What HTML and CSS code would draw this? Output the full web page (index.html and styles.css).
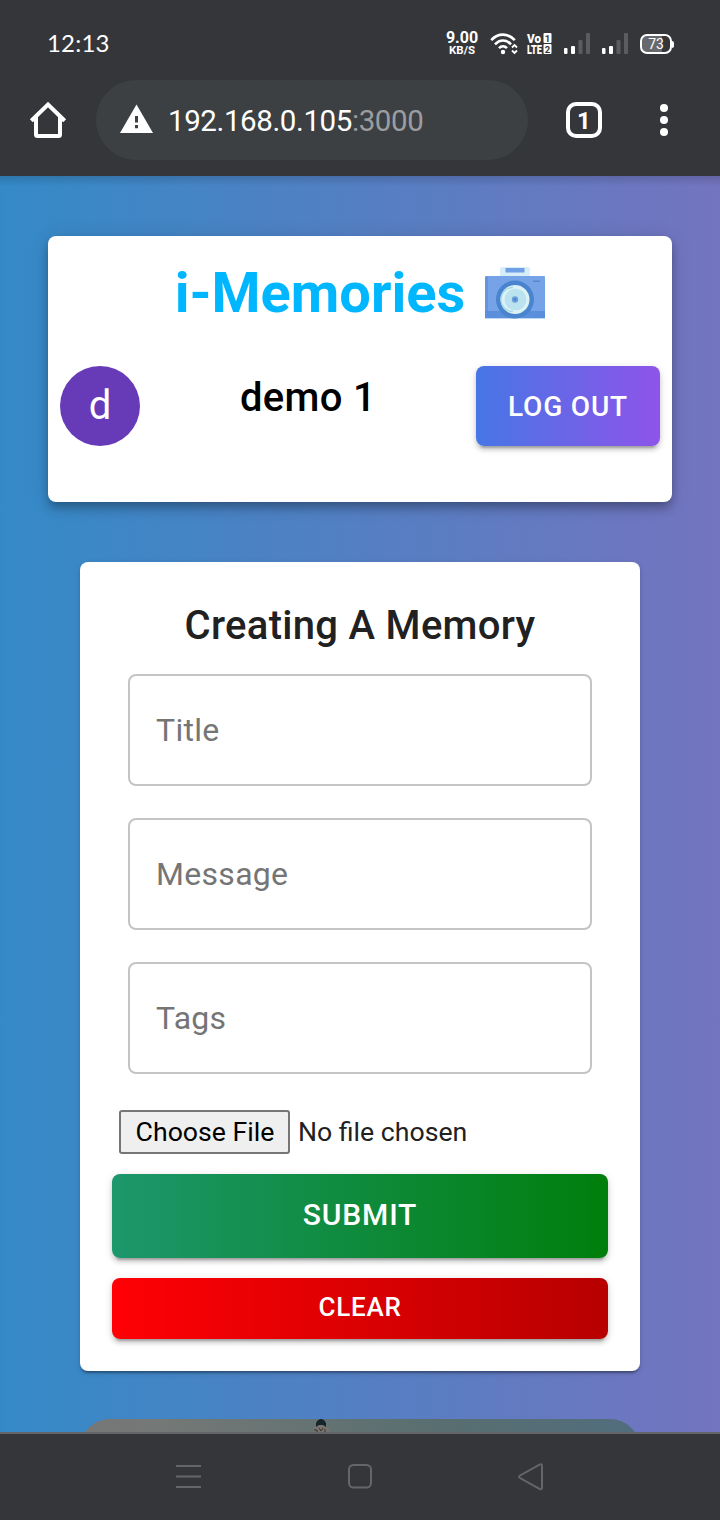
FILE: index.html
```html
<!DOCTYPE html>
<html lang="en">
<head>
<meta charset="utf-8">
<title>i-Memories</title>
<link rel="stylesheet" href="styles.css">
</head>
<body>
<div class="screen">
  <header class="chrome">
    <div class="status">
      <span class="clock">12:13</span>
      <div class="status-icons">
        <div class="speed"><span class="speed-value">9.00</span><span class="speed-unit">KB/S</span></div>
        <svg class="wifi" width="28" height="24" viewBox="0 0 28 24" fill="none" stroke="#fff" stroke-width="2.6">
          <path d="M1.2 8.2C8 .8 18 .8 24.8 8.2M5 12.3C9.800 7.200 16.200 7.200 21 12.300M9 16.200C11.500 13.500 14.500 13.500 17 16.200"/>
          <circle cx="13" cy="20" r="2.200" fill="#fff" stroke="none"/>
          <path d="M22 15.500L24.500 13L27 15.500M22 18.500L24.500 21L27 18.500" stroke-width="1.800"/>
        </svg>
        <svg class="volte" width="25" height="22" viewBox="0 0 25 22">
          <g fill="#fff"><rect x="16.500" width="8" height="10" rx="1"/><rect x="16.500" y="11" width="8" height="10" rx="1"/></g>
          <g class="volte-text" fill="#fff">
            <text transform="translate(0 9.700) scale(1 1.180)" textLength="14" lengthAdjust="spacingAndGlyphs">Vo</text>
            <text transform="translate(0 21) scale(1 1.180)" textLength="15" lengthAdjust="spacingAndGlyphs">LTE</text>
          </g>
          <g class="sim" fill="#35363a" text-anchor="middle"><text x="20.500" y="8.500">1</text><text x="20.500" y="19.500">2</text></g>
        </svg>
        <svg class="signal" width="26" height="22" viewBox="0 0 26 22"><g fill="#fff"><rect y="15" width="3.500" height="6" rx="1"/><rect x="7" y="13" width="4" height="8" rx="1"/></g><g fill="#5b5c60"><rect x="14.500" y="7" width="4" height="14" rx="1"/><rect x="22" width="4" height="21" rx="1"/></g></svg>
        <svg class="signal" width="26" height="22" viewBox="0 0 26 22"><g fill="#fff"><rect y="15" width="3.500" height="6" rx="1"/><rect x="7" y="13" width="4" height="8" rx="1"/></g><g fill="#5b5c60"><rect x="14.500" y="7" width="4" height="14" rx="1"/><rect x="22" width="4" height="21" rx="1"/></g></svg>
        <div class="battery">73</div><i class="battery-tip"></i>
      </div>
    </div>
    <div class="toolbar">
      <svg class="home" width="36" height="38" viewBox="0 0 36 38" fill="none" stroke="#fff" stroke-width="4"><path d="M1.300 19.800L18 3.500L34.700 19.800M6 16V33.500Q6 35 7.500 35H28.500Q30 35 30 33.500V16"/></svg>
      <div class="address">
        <svg width="34" height="30" viewBox="0 0 34 30"><path d="M16.500 -.5L33 28H0Z" fill="#fff"/><path d="M15 11h3v6.500h-3zM15 20h3v3.200h-3z" fill="#3c4043"/></svg>
        <span class="url">192.168.0.105<span class="port">:3000</span></span>
      </div>
      <div class="tabs">1</div>
      <div class="more"><i></i><i></i><i></i></div>
    </div>
  </header>

  <main class="page">
    <section class="appbar">
      <div class="brand">
        <h1>i-Memories</h1>
        <svg class="camera" width="60" height="52" viewBox="0 0 60 52">
          <rect x="15" y="0" width="30" height="12" rx="2" fill="#d7edf8"/>
          <rect x="20.500" y="1" width="19" height="4.500" fill="#6f9fe4"/>
          <rect y="9" width="60" height="42" rx="1" fill="#76a3e7"/>
          <path d="M0 10h3v34H0z" fill="#6695dc"/>
          <path d="M0 44h60v7H0z" fill="#5c8fdb"/>
          <path d="M0 51h60v1H0z" fill="#bdd9f1"/>
          <rect x="48" y="13.500" width="7" height="1.500" rx=".7" fill="#5686cc"/>
          <circle cx="30" cy="32.500" r="19" fill="#4984ce"/>
          <circle cx="30" cy="32.500" r="14.500" fill="#dcf2f6"/>
          <circle cx="30.500" cy="32.500" r="10.800" fill="#bae3ef"/>
          <path d="M28 20.500A12 12 0 0 0 28 44.500" fill="none" stroke="#a8d8e2" stroke-width="1.300"/>
          <circle cx="30" cy="32.500" r="3.200" fill="#6c9fda"/>
          <circle cx="30" cy="32.500" r="1.300" fill="#4984ce"/>
        </svg>
      </div>
      <div class="profile">
        <div class="avatar">d</div>
        <div class="username">demo 1</div>
        <button class="btn logout">LOG OUT</button>
      </div>
    </section>

    <form class="card">
      <h2>Creating A Memory</h2>
      <input class="field" placeholder="Title">
      <input class="field" placeholder="Message">
      <input class="field" placeholder="Tags">
      <div class="file"><button type="button" class="choose">Choose File</button><span>No file chosen</span></div>
      <button type="button" class="btn submit">SUBMIT</button>
      <button type="button" class="btn clear">CLEAR</button>
    </form>

    <div class="post">
      <svg width="16" height="14" viewBox="0 0 16 14"><path d="M0 14V10Q3 8 3 4Q5 0 8 0Q11 0 13 4Q13 8 16 10V14Z" fill="#77736f"/><path d="M3 8V4Q5 0 8 0Q11 0 13 4V8L10 6H6Z" fill="#16252b"/><path d="M1 11h3v2M6 9l2 3 2-3M12 10v3" fill="none" stroke="#37342f"/></svg>
    </div>
  </main>

  <footer class="navbar">
    <svg width="26" height="26" viewBox="0 0 26 26" stroke="#65666a" stroke-width="2"><path d="M0 2H25M0 12.500H25M0 23H25"/></svg>
    <svg width="26" height="26" viewBox="0 0 26 26" fill="none" stroke="#65666a" stroke-width="2"><rect x="2" y="1" width="22" height="22.500" rx="4.500"/></svg>
    <svg width="26" height="28" viewBox="0 0 26 28" fill="none" stroke="#65666a" stroke-width="2"><path d="M2 12.500L21.500 1.600Q24 .6 24 3V24.500Q24 27 21.500 25.800L2 15Q.2 13.700 2 12.500Z"/></svg>
  </footer>
</div>
</body>
</html>
```

FILE: styles.css
```css
* { box-sizing: border-box; }
body { margin: 0; font-family: Roboto, "Liberation Sans", sans-serif; }
h1, h2 { margin: 0; }
svg { display: block; flex: none; overflow: visible; }
button, input { font-family: inherit; margin: 0; }

.screen { width: 720px; height: 1520px; display: flex; flex-direction: column; overflow: hidden; }

.chrome { height: 176px; flex: none; background: #35363a; color: #fff; }
.status { height: 80px; padding: 8px 46px 0 47px; display: flex; align-items: center; justify-content: space-between; }
.clock { font-family: Lato, sans-serif; font-size: 24px; line-height: 28px; letter-spacing: .2px; padding-bottom: 2px; }
.status-icons { display: flex; align-items: center; }
.speed { width: 34px; display: flex; flex-direction: column; align-items: center; font-weight: 700; }
.speed-value { font-size: 16px; line-height: 13px; }
.speed-unit { font-size: 11.500px; line-height: 13px; }
.wifi { margin-left: 11px; }
.volte { margin-left: 9px; }
.volte-text { font-size: 11.500px; font-weight: 900; }
.sim { font-size: 9.500px; font-weight: 700; }
.signal { margin-left: 12px; }
.battery { margin-left: 12px; width: 32px; height: 20px; border: 2px solid #fff; border-radius: 7px; background: linear-gradient(90deg, #68696c 73%, #35363a 73%); font-size: 14px; line-height: 16px; text-align: center; }
.battery-tip { width: 2px; height: 7px; background: #fff; border-radius: 0 2px 2px 0; }

.toolbar { height: 80px; display: flex; align-items: center; padding-left: 30px; }
.address { width: 432px; height: 80px; margin-left: 30px; padding-left: 24px; border-radius: 40px; background: #3c4043; display: flex; align-items: center; gap: 14px; }
.url { padding-top: 2px; font-size: 29.500px; letter-spacing: -.4px; white-space: nowrap; }
.port { color: #9b9da0; }
.tabs { width: 36px; height: 36px; margin-left: 38px; border: 4px solid #fff; border-radius: 10px; font-size: 24px; font-weight: 700; line-height: 30px; text-align: center; }
.more { margin-left: 58px; display: flex; flex-direction: column; gap: 4px; }
.more i { width: 8px; height: 8px; border-radius: 50%; background: #fff; }

.page { flex: 1; min-height: 0; overflow: hidden; display: flex; flex-direction: column; align-items: center; padding-top: 60px; background: linear-gradient(180deg, rgba(0,0,0,.14), transparent 10px), linear-gradient(90deg, #348ac7, #7474bf); }

.appbar { width: 624px; height: 266px; flex: none; padding: 29px 12px 0; background: #fff; border-radius: 8px; box-shadow: 0 4px 8px -2px rgba(0,0,0,.2), 0 8px 10px rgba(0,0,0,.14), 0 2px 20px rgba(0,0,0,.12); }
.brand { height: 101px; display: flex; justify-content: center; align-items: flex-start; gap: 20px; }
.brand h1 { font-size: 56px; line-height: 56px; font-weight: 700; color: #00b7ff; }
.camera { margin-top: 2px; }
.profile { display: flex; justify-content: space-between; align-items: flex-start; }
.avatar { width: 80px; height: 80px; border-radius: 50%; background: #673ab7; color: #fff; font-size: 40px; line-height: 80px; text-align: center; }
.username { font-size: 40px; line-height: 64px; font-weight: 500; letter-spacing: .3px; color: #000; }
.btn { border: 0; padding: 0; border-radius: 8px; color: #fff; font-weight: 500; display: block; text-align: center; box-shadow: 0 6px 2px -4px rgba(0,0,0,.2), 0 4px 4px rgba(0,0,0,.14), 0 2px 10px rgba(0,0,0,.12); }
.logout { width: 184px; height: 80px; font-size: 28px; letter-spacing: .8px; background: linear-gradient(90deg, #4776e6, #8e54e9); }

.card { width: 560px; height: 809px; flex: none; margin-top: 60px; padding: 32px 32px 0; background: #fff; border-radius: 8px; color: #212121; box-shadow: 0 4px 2px -2px rgba(0,0,0,.2), 0 2px 2px rgba(0,0,0,.14), 0 2px 6px rgba(0,0,0,.12); }
.card h2 { font-size: 40px; line-height: 64px; font-weight: 500; letter-spacing: .3px; text-align: center; }
.field { display: block; width: 464px; height: 112px; margin: 0 auto 32px; padding: 0 26px; border: 2px solid #c4c4c4; border-radius: 8px; background: #fff; font-size: 32px; letter-spacing: .3px; }
.card h2 + .field { margin-top: 16px; }
.field::placeholder { color: #757575; opacity: 1; }
.file { height: 44px; margin: 36px 0 20px 7px; display: flex; align-items: center; gap: 8px; font-size: 26.667px; white-space: nowrap; }
.choose { width: 171px; height: 44px; padding: 0 0 0 1px; border: 2px solid #767676; border-radius: 3px; background: #efefef; color: #000; font-size: 26.667px; }
.submit { width: 496px; height: 84px; padding-bottom: 4px; font-size: 30px; letter-spacing: .85px; background: linear-gradient(90deg, #1d976c, #007e0b); }
.clear { width: 496px; height: 61px; margin-top: 20px; padding-bottom: 4px; font-size: 26px; letter-spacing: .75px; background: linear-gradient(90deg, #ff0005, #b70000); }

.post { width: 560px; height: 80px; flex: none; margin-top: 48px; padding-left: 233px; border-radius: 30px; background: linear-gradient(90deg, #777, #747876 15%, #586e70 65%, #516d7d); }

.navbar { height: 88px; flex: none; background: #35363a; border-top: 2px solid #636468; padding: 0 176px 1px; display: flex; align-items: center; justify-content: space-between; }
```
